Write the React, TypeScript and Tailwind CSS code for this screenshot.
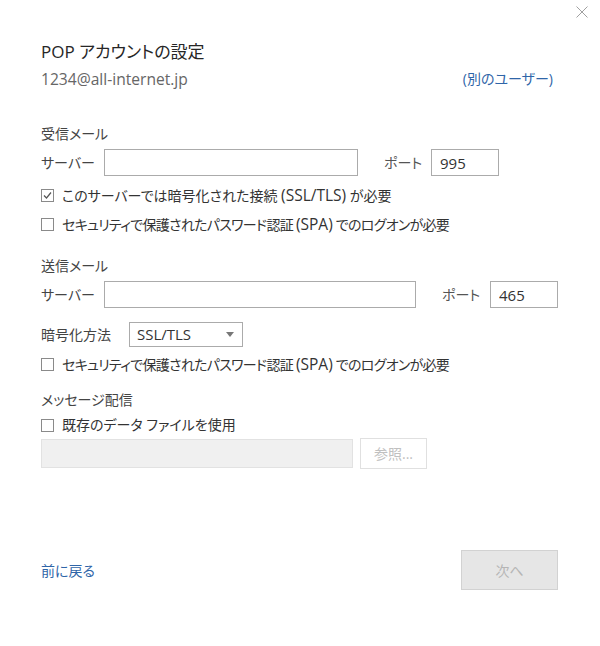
import React from 'react';

const font = "font-['Open_Sans','Noto_Sans_CJK_JP',sans-serif] [font-feature-settings:'palt']";

const Checkbox = ({ checked, tight, children }: { checked?: boolean; tight?: boolean; children: React.ReactNode }) => (
  <div className="flex items-center h-[20px]">
    <span className="w-[13px] h-[13px] border border-[#8a8a8a] bg-white flex items-center justify-center">
      {checked && (
        <svg width="11" height="11" viewBox="0 0 11 11">
          <path d="M2 5.5 L4.5 8 L9 2.5" fill="none" stroke="#555" strokeWidth="1.2" />
        </svg>
      )}
    </span>
    <span
      className={`ml-[8px] text-[14px] text-[#333] leading-[20px] whitespace-nowrap ${tight ? 'tracking-[-0.7px]' : ''}`}
    >
      {children}
    </span>
  </div>
);

const Latin = ({ children }: { children: React.ReactNode }) => (
  <span className="text-[15.5px] tracking-normal">{children}</span>
);

const Section = ({ title }: { title: string }) => (
  <div className="text-[14px] leading-[20px] text-[#444]">{title}</div>
);

const App: React.FC = () => {
  return (
    <div className={`relative w-[600px] h-[646px] bg-white pl-[41px] ${font}`}>
      <button className="absolute top-[6px] right-[12px] w-[12px] h-[12px]">
        <svg width="12" height="12" viewBox="0 0 12 12">
          <path d="M0.5 0.5 L11.5 11.5 M11.5 0.5 L0.5 11.5" stroke="#a0a0a0" strokeWidth="1" />
        </svg>
      </button>

      <div className="pt-[40px] text-[17px] leading-[24px] text-[#262626]">POP アカウントの設定</div>
      <div className="mt-[5px] w-[512px] flex justify-between items-center leading-[20px]">
        <span className="text-[15.6px] text-[#666]">1234@all-internet.jp</span>
        <span className="text-[14px] text-[#2f65a8]">(別のユーザー)</span>
      </div>

      <div className="mt-[35px]">
        <Section title="受信メール" />
      </div>
      <div className="mt-[5px] flex items-center h-[27px]">
        <span className="w-[63px] text-[14px] text-[#444]">サーバー</span>
        <input className="w-[254px] h-[27px] border border-[#ababab] outline-none px-[8px] text-[15px]" />
        <span className="ml-[26px] w-[47px] text-[14px] text-[#555]">ポート</span>
        <input
          defaultValue="995"
          className="w-[68px] h-[27px] border border-[#ababab] outline-none px-[8px] text-[15px] text-[#333]"
        />
      </div>
      <div className="mt-[9px]">
        <Checkbox checked>
          このサーバーでは暗号化された接続 <Latin>(SSL/TLS)</Latin> が必要
        </Checkbox>
      </div>
      <div className="mt-[9px]">
        <Checkbox tight>
          セキュリティで保護されたパスワード認証 <Latin>(SPA)</Latin> でのログオンが必要
        </Checkbox>
      </div>

      <div className="mt-[22px]">
        <Section title="送信メール" />
      </div>
      <div className="mt-[5px] flex items-center h-[27px]">
        <span className="w-[63px] text-[14px] text-[#444]">サーバー</span>
        <input className="w-[312px] h-[27px] border border-[#ababab] outline-none px-[8px] text-[15px]" />
        <span className="ml-[26px] w-[48px] text-[14px] text-[#555]">ポート</span>
        <input
          defaultValue="465"
          className="w-[68px] h-[27px] border border-[#ababab] outline-none px-[8px] text-[15px] text-[#333]"
        />
      </div>
      <div className="mt-[14px] flex items-center h-[25px]">
        <span className="w-[88px] text-[14px] text-[#444]">暗号化方法</span>
        <div className="w-[114px] h-[25px] border border-[#ababab] flex items-center justify-between pl-[7px] pr-[8px]">
          <span className="text-[15px] text-[#333]">SSL/TLS</span>
          <svg width="8" height="5" viewBox="0 0 8 5">
            <path d="M0 0 L8 0 L4 5 Z" fill="#777" />
          </svg>
        </div>
      </div>
      <div className="mt-[7px]">
        <Checkbox tight>
          セキュリティで保護されたパスワード認証 <Latin>(SPA)</Latin> でのログオンが必要
        </Checkbox>
      </div>

      <div className="mt-[16px]">
        <Section title="メッセージ配信" />
      </div>
      <div className="mt-[5px]">
        <Checkbox>既存のデータ ファイルを使用</Checkbox>
      </div>
      <div className="mt-[3px] flex items-center">
        <div className="w-[312px] h-[29px] bg-[#f0f0f0] border border-[#e2e2e2]" />
        <button className="ml-[7px] w-[67px] h-[31px] border border-[#e0e0e0] bg-white text-[14px] text-[#c0c0c0]">
          参照...
        </button>
      </div>

      <div className="mt-[81px] w-[517px] flex items-center justify-between">
        <a className="text-[14px] text-[#2f65a8]">前に戻る</a>
        <button className="w-[97px] h-[40px] bg-[#e6e6e6] border border-[#d2d2d2] text-[14px] text-[#b5b5b5]">
          次へ
        </button>
      </div>
    </div>
  );
};

export default App;
